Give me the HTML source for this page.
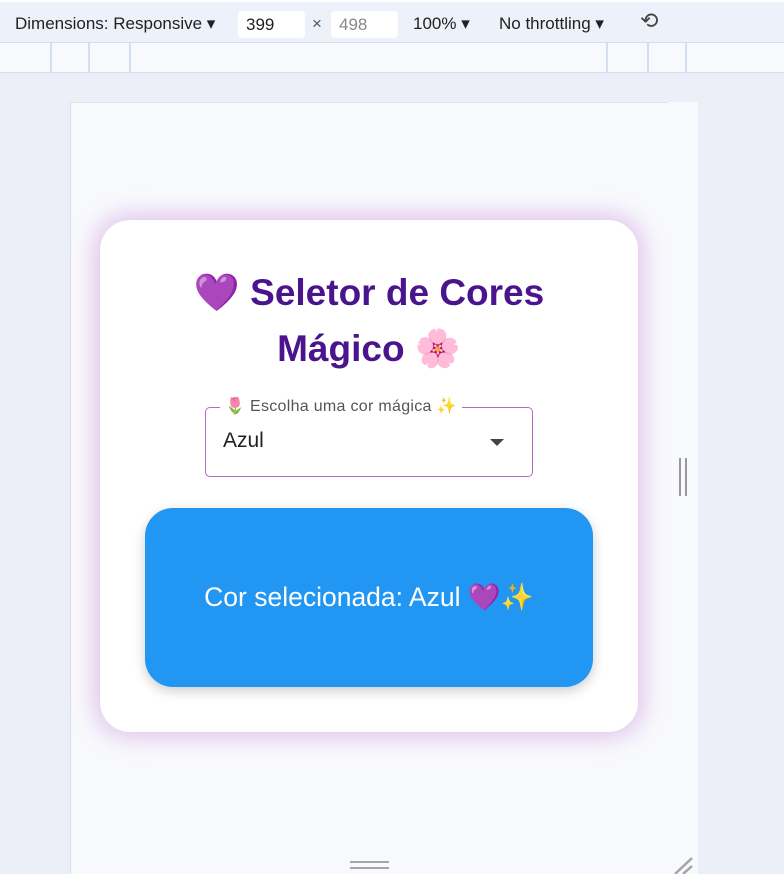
<!DOCTYPE html>
<html><head><meta charset="utf-8"><style>
*{box-sizing:border-box;margin:0;padding:0}
body{width:784px;height:874px;overflow:hidden;background:#eceff8;font-family:"Liberation Sans","Noto Sans CJK JP",sans-serif;position:relative}
.tb{position:absolute;left:0;top:0;width:784px;height:42px;background:#edf1fa;border-top:2px solid #fff;font-size:17px;color:#222}
.tb span{position:absolute;top:12px}
.inp{position:absolute;top:9px;height:27px;background:#fff;border-radius:4px;padding:4px 8px;font-size:17px}
.rul{position:absolute;left:0;top:42px;width:784px;height:31px;background:#f8f9fd;border-top:1px solid #d3def3;border-bottom:1px solid #d3def3}
.rul i{position:absolute;top:0;width:2px;height:29px;background:#d3def3}
.vp{position:absolute;left:70px;top:102px;width:598px;height:772px;background:#f8f9fd;border-left:1px solid #dde;border-top:1px solid #e4e4e8}
.rs{position:absolute;left:668px;top:102px;width:30px;height:772px;background:#f8f9fd}
.card{position:absolute;left:100px;top:220px;width:538px;height:512px;background:#fff;border-radius:30px;box-shadow:0 0 22px 6px rgba(186,104,200,.35)}
h1{position:absolute;left:0;top:45px;width:538px;text-align:center;font-size:37px;line-height:56px;font-weight:bold;color:#4a148c}
.sel{position:absolute;left:105px;top:187px;width:328px;height:70px;border:1.5px solid #ba68c8;border-radius:5px}
.lab{position:absolute;left:14px;top:-12px;background:#fff;padding:0 5px;font-size:16px;color:#555;letter-spacing:.3px}
.val{position:absolute;left:17px;top:21px;font-size:21px;color:#222}
.arr{position:absolute;right:28px;top:31px;width:0;height:0;border-left:7px solid transparent;border-right:7px solid transparent;border-top:7px solid #444}
.box{position:absolute;left:45px;top:288px;width:448px;height:179px;background:#2196f3;border-radius:28px;box-shadow:0 4px 12px rgba(0,0,0,.2);color:#fff;font-size:26.5px;text-align:center;line-height:179px}
</style></head><body>
<div class="tb"><span style="left:15px">Dimensions: Responsive ▾</span>
<div class="inp" style="left:238px;width:67px">399</div><span style="left:312px;color:#555">×</span>
<div class="inp" style="left:331px;width:67px;color:#888">498</div>
<span style="left:413px">100% ▾</span><span style="left:499px">No throttling ▾</span><span style="left:640px;font-size:22px;top:6px;color:#444">⟲</span></div>
<div class="rul"><i style="left:50px"></i><i style="left:88px"></i><i style="left:129px"></i><i style="left:606px"></i><i style="left:647px"></i><i style="left:685px"></i></div>
<div class="vp"></div><div class="rs"></div>
<div style="position:absolute;left:679px;top:458px;width:8px;height:38px;border-left:2px solid #999;border-right:2px solid #999"></div>
<div style="position:absolute;left:350px;top:861px;width:39px;height:8px;border-top:2px solid #a5a5a5;border-bottom:2px solid #a5a5a5"></div>
<svg style="position:absolute;left:672px;top:854px" width="22" height="20"><path d="M3 20L20 4M11 20L20 12" stroke="#a5a5a5" stroke-width="2.5"/></svg>
<div class="card">
<h1>💜 Seletor de Cores<br>Mágico 🌸</h1>
<div class="sel"><div class="lab">🌷 Escolha uma cor mágica ✨</div><div class="val">Azul</div><div class="arr"></div></div>
<div class="box">Cor selecionada: Azul 💜✨</div>
</div>
</body></html>
